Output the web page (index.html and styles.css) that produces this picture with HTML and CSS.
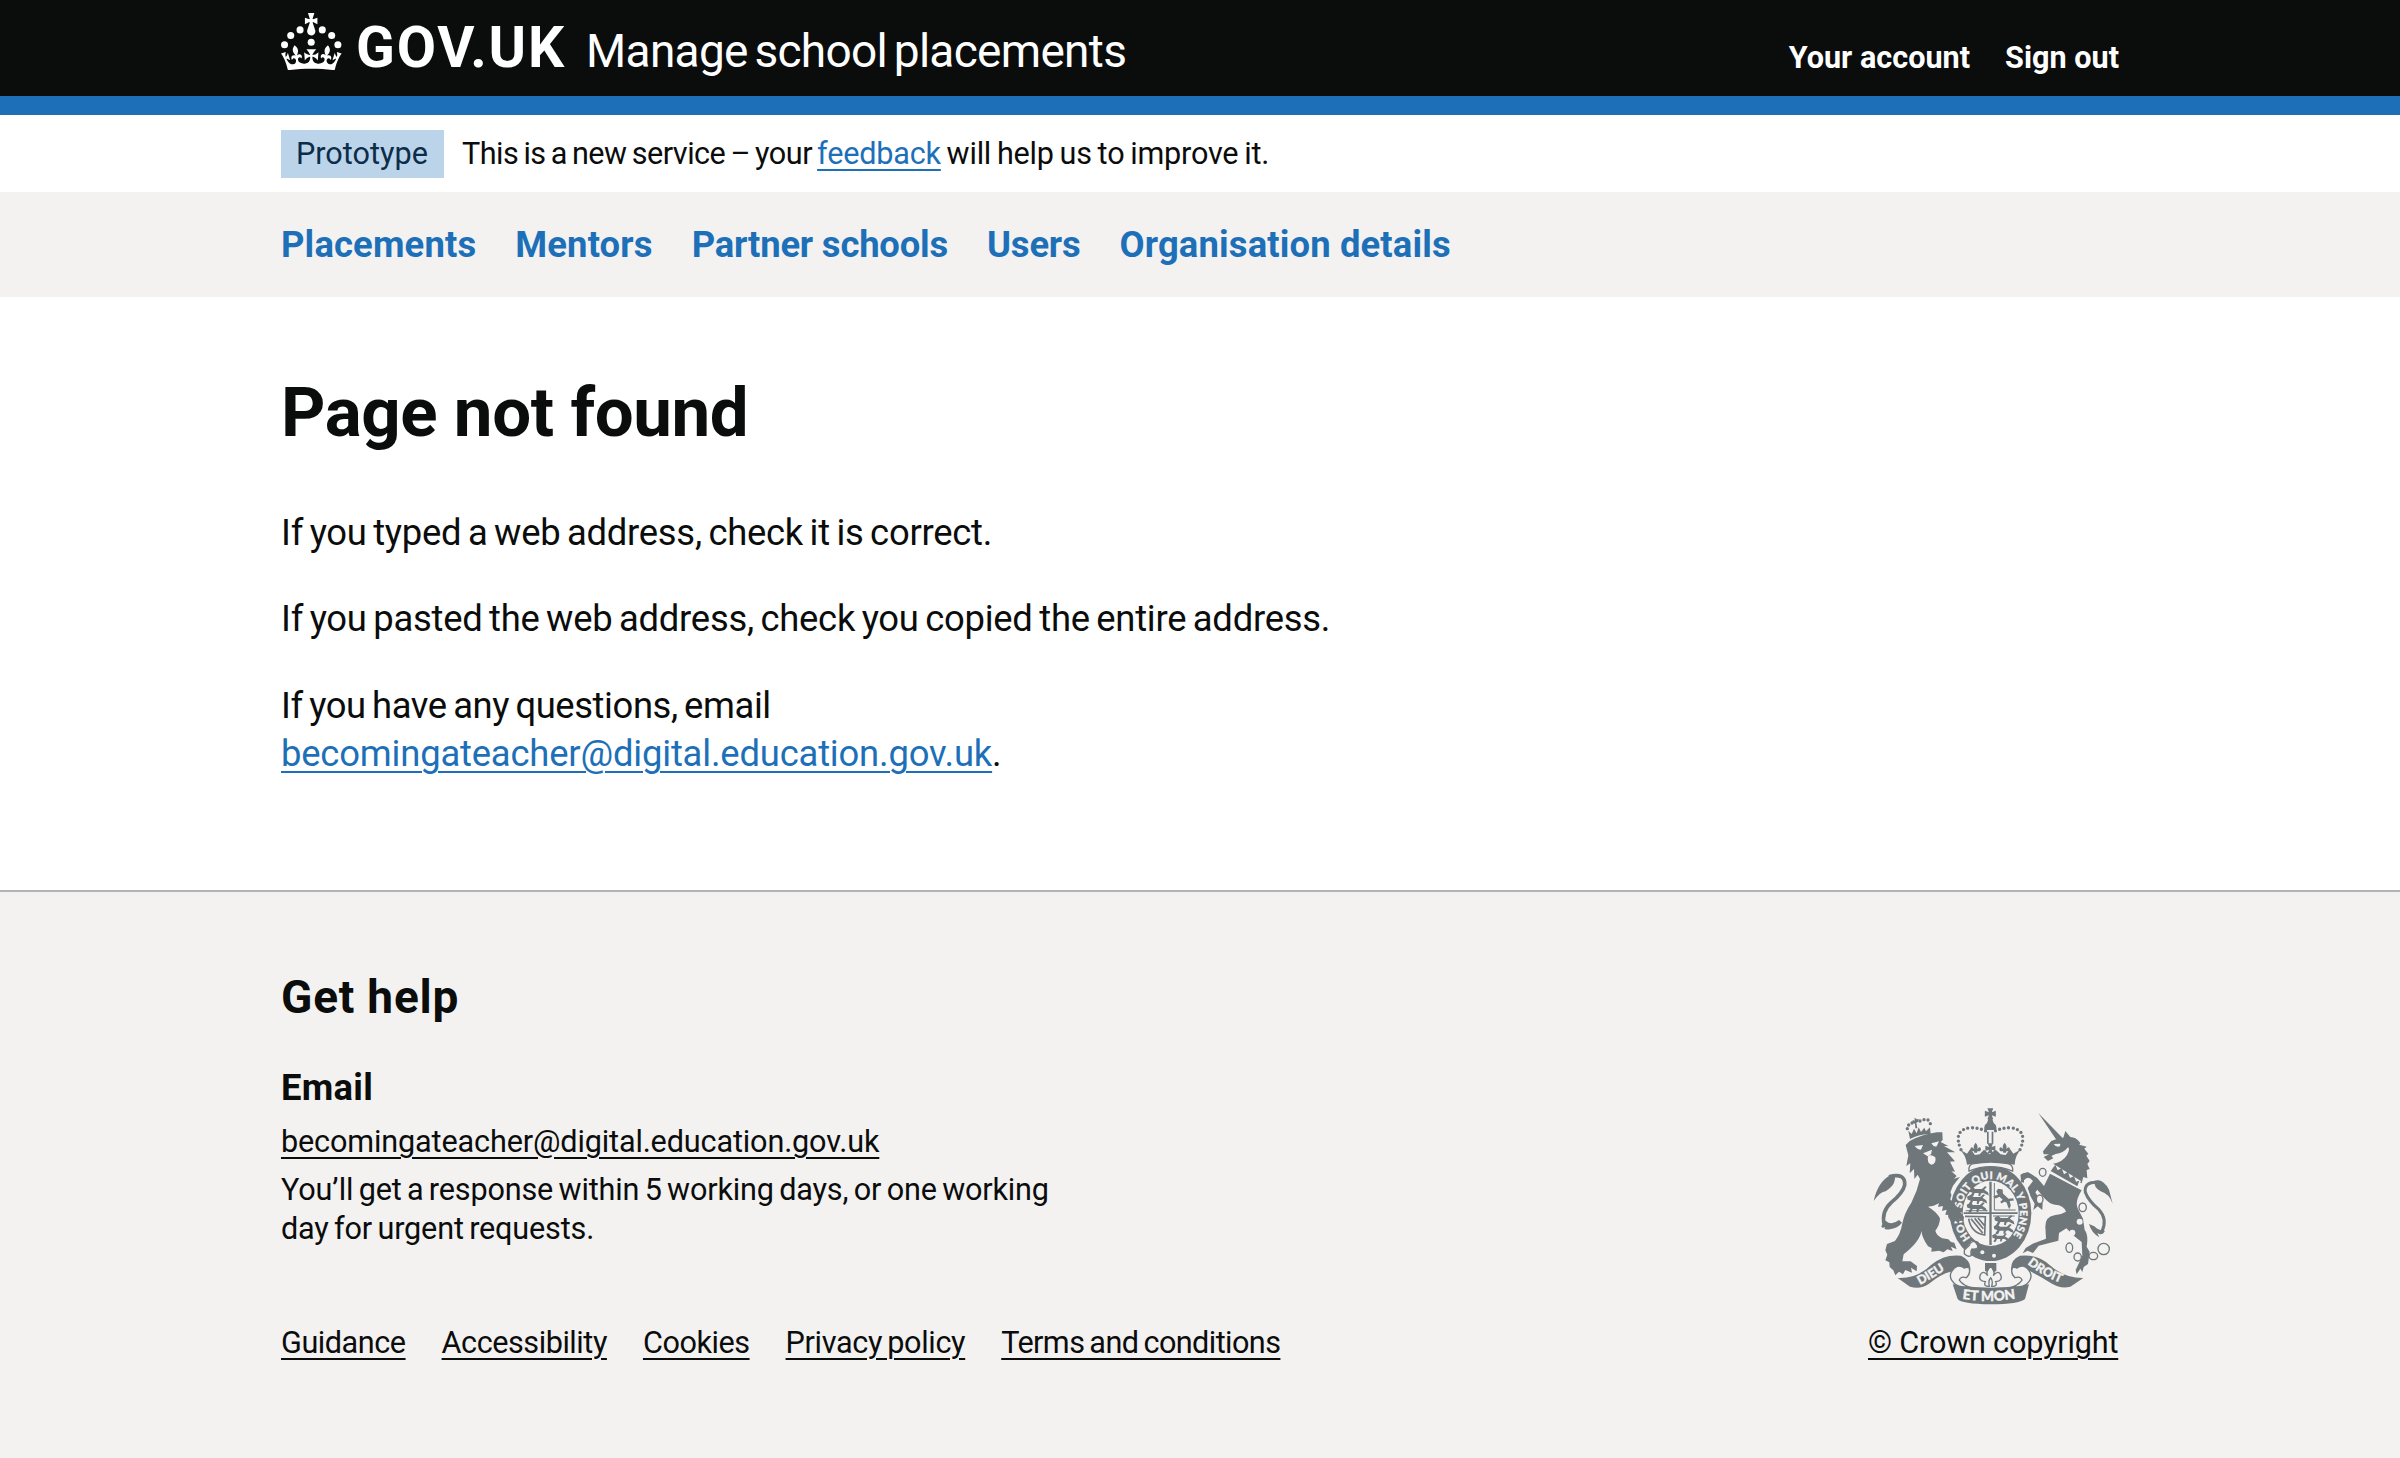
FILE: index.html
```
<!DOCTYPE html>
<html lang="en">
<head>
<meta charset="utf-8">
<title>Page not found - Manage school placements - GOV.UK</title>
<link rel="stylesheet" href="styles.css">
</head>
<body>
<header class="header">
  <div class="container header__row">
    <a class="header__home" href="#">
      <svg class="header__crown" viewBox="0 0 64 60" fill="currentColor" aria-hidden="true">
        <circle cx="20" cy="17.6" r="3.7"/><circle cx="10.2" cy="23.5" r="3.7"/><circle cx="3.7" cy="33.2" r="3.7"/>
        <circle cx="31.7" cy="30.6" r="3.7"/><circle cx="43.3" cy="17.6" r="3.7"/><circle cx="53.2" cy="23.5" r="3.7"/><circle cx="59.7" cy="33.2" r="3.7"/>
        <path d="M33.1,9.8c.2-.1.3-.3.5-.5l4.6,2.4v-6.8l-4.6,1.5c-.1-.2-.3-.3-.5-.5l1.9-5.9h-6.7l1.9,5.9c-.2.1-.3.3-.5.5l-4.6-1.5v6.8l4.6-2.4c.1.2.3.3.5.5l-2.6,8c-.9,2.8,1.2,5.7,4.1,5.7h0c3,0,5.1-2.9,4.1-5.7l-2.6-8ZM37,37.9s-3.4,3.8-4.1,6.1c2.2,0,4.2-.5,6.4-2.8l-.7,8.5c-2-2.8-4.4-4.1-5.7-3.8.1,3.1.5,6.7,5.8,7.2,3.7.3,6.7-1.5,7-3.8.4-2.6-2-4.3-3.7-1.6-1.4-4.5,2.4-6.1,4.9-3.2-1.9-4.5-1.8-7.7,2.4-10.9,3,4,2.6,7.3-1.2,11.1,2.4-1.3,6.2,0,4,4.6-1.2-2.8-3.7-2.2-4.2.2-.3,1.7.7,3.7,3,4.2,1.9.3,4.7-.9,7-5.9-1.3,0-2.4.7-3.9,1.7l2.4-8c.6,2.3,1.4,3.7,2.2,4.5.6-1.6.5-2.8,0-5.3l5,1.8c-2.6,3.6-5.2,8.7-7.3,17.5-7.4-1.1-15.7-1.7-24.5-1.7h0c-8.8,0-17.1.6-24.5,1.7-2.1-8.9-4.7-13.9-7.3-17.5l5-1.8c-.5,2.5-.6,3.7,0,5.3.8-.8,1.6-2.3,2.2-4.5l2.4,8c-1.5-1-2.6-1.7-3.9-1.7,2.3,5,5.2,6.2,7,5.9,2.3-.4,3.3-2.4,3-4.2-.5-2.4-3-3.1-4.2-.2-2.2-4.6,1.6-6,4-4.6-3.7-3.7-4.2-7.1-1.2-11.1,4.2,3.2,4.3,6.4,2.4,10.9,2.5-2.8,6.3-1.3,4.9,3.2-1.8-2.7-4.1-1-3.7,1.6.3,2.3,3.3,4.1,7,3.8,5.4-.5,5.7-4.2,5.8-7.2-1.3-.2-3.7,1-5.7,3.8l-.7-8.5c2.2,2.3,4.2,2.7,6.4,2.8-.7-2.3-4.1-6.1-4.1-6.1h10.6Z"/>
      </svg>
      <span class="header__logotype">GOV.UK</span>
      <span class="header__service">Manage school placements</span>
    </a>
    <nav class="header__account">
      <a class="header__link" href="#">Your account</a>
      <a class="header__link" href="#">Sign out</a>
    </nav>
  </div>
</header>
<div class="accent"></div>
<div class="container phase">
  <strong class="phase__tag">Prototype</strong>
  <span class="phase__text"><span class="phase__intro">This is a new service – your </span><a class="link" href="#">feedback</a> will help us to improve it.</span>
</div>
<nav class="primary-nav">
  <div class="container primary-nav__list">
    <a class="primary-nav__link" href="#">Placements</a>
    <a class="primary-nav__link" href="#">Mentors</a>
    <a class="primary-nav__link primary-nav__link--tight" href="#">Partner schools</a>
    <a class="primary-nav__link primary-nav__link--tight" href="#">Users</a>
    <a class="primary-nav__link" href="#">Organisation details</a>
  </div>
</nav>
<main class="container main">
  <h1 class="heading-xl">Page not found</h1>
  <p class="body">If you typed a web address, check it is correct.</p>
  <p class="body">If you pasted the web address, check you copied the entire address.</p>
  <p class="body"><span class="body__tight">If you have any questions, email</span><br><a class="link body__email" href="#">becomingateacher@digital.education.gov.uk</a>.</p>
</main>
<footer class="footer">
  <div class="container footer__row">
    <div class="footer__meta">
      <h2 class="heading-m">Get help</h2>
      <h3 class="heading-s">Email</h3>
      <p class="footer__text"><a class="link link--dark" href="#">becomingateacher@digital.education.gov.uk</a></p>
      <p class="footer__text footer__text--hours">You’ll get a response within 5 working days, or one working<br>day for urgent requests.</p>
      <ul class="footer__links">
        <li><a class="link link--dark" href="#">Guidance</a></li>
        <li><a class="link link--dark" href="#">Accessibility</a></li>
        <li><a class="link link--dark" href="#">Cookies</a></li>
        <li class="footer__links-privacy"><a class="link link--dark" href="#">Privacy policy</a></li>
        <li class="footer__links-terms"><a class="link link--dark" href="#">Terms and conditions</a></li>
      </ul>
    </div>
    <a class="copyright" href="#">
      <svg class="copyright__arms" viewBox="25 30 753 610" aria-hidden="true">
        <defs>
          <path id="garter" d="M332 429 A88 103 0 1 1 454 429"/>
          <path id="dieu" d="M181 570 Q228 545 275 512"/>
          <path id="droit" d="M503 507 Q550 545 613 567"/>
          <path id="etmon" d="M308 612 Q392 624 480 609"/>
          <g id="lily"><path d="M0-18Q9-8 4 2Q14-10 16 2Q16 9 9 8Q5 5 4 12H-4Q-5 5-9 8Q-16 9-16 2Q-14-10-4 2Q-9-8 0-18Z"/></g>
          <g id="cross"><path d="M-4-4L-8-15H8L4-4L15-8V8L4 4L8 15H-8L-4 4L-15 8V-8Z"/></g>
          <g id="beast"><path d="M-26-6l10-5 7 6H10l8-7 5 2-7 7 10 6 3 8-8-3-8-4-6 2-2 7-5-1 1-7H-10l-4 8-8 1 2-5 4-5-9-3Z"/></g>
        </defs>
        <g class="arms-fill">
          <!-- lion -->
          <path d="M151 132L146 107L156 117L163 101L171 115L177 97L184 111L194 98L199 109L211 97L213 118Q180 116 151 132Z"/>
          <circle cx="143" cy="101" r="5"/><circle cx="147" cy="90" r="5"/><circle cx="157" cy="84" r="5"/><circle cx="181" cy="78" r="5"/><circle cx="193" cy="74" r="5"/><circle cx="205" cy="75" r="5"/><circle cx="212" cy="86" r="5"/>
          <path d="M164 68l8 5 5-1-1 8-6 3 3 17h-6l-1-14-7-3 0-8 7 2Z"/>
          <path d="M138 150L150 138Q190 117 232 112L248 112L249 135L243 141L266 153L253 153L287 172L262 172L286 199L271 200L286 230L275 229L291 243L283 251L301 246L291 258L280 272L272 292Q288 322 298 348L311 372L303 380L292 368L289 380L278 371L268 376L266 360L257 359L261 344L247 348L250 333L235 336L238 325L222 332L205 335Q231 350 241 370Q241 389 227 407Q230 421 248 430L266 433L274 441L284 443L291 463L274 455L279 468L263 463L252 472L238 467L215 470L216 459L205 454Q188 430 185 408Q182 438 132 478L128 499L153 499L172 513L171 529L154 518L157 533L137 525L130 538L118 530L107 541L101 526L90 516L89 502L77 496L83 479L77 466L82 447L106 438Q122 417 127 390Q133 355 155 323Q173 288 181 252L174 239L164 252L163 222L150 235L152 205L140 213L146 181Z"/>
          <path d="M42 318Q55 260 92 241Q113 241 103 263Q98 275 78 289Q62 290 42 318Z"/>
          <path d="M70 385Q58 402 76 397Q70 407 94 402Q115 399 127 383L118 375Q95 393 78 377Z"/>
          <!-- unicorn -->
          <path d="M536 54L608 128L594 140Z"/>
          <path d="M550 169L575 138L597 130L611 128L617 108L632 126Q650 126 662 144L659 149L681 155L674 161L686 176L680 182L690 198L683 207L690 222L681 225L683 250L671 246L666 265L654 260L588 218L578 207Q609 202 622 180Q632 162 625 157Q611 175 588 177L575 183L581 190L565 198L552 186L568 178L552 178Z"/>
          <path d="M571 236L666 286Q645 320 654 340L670 371L675 405Q687 420 681 455L690 470L685 507L672 516L668 531L662 521L651 538L648 525L668 482L666 441L646 425L620 400L598 414L596 437L537 452L520 474L504 467L489 475L498 459L519 446L559 431Q558 410 557 395Q557 365 584 361Q605 359 619 350Q612 330 586 329Q568 326 553 308L533 284L527 292L541 316L549 325L548 345L534 334L521 345L525 326L512 303L504 279L520 258Q505 240 493 256L493 269L483 259L487 238L504 231L532 248L553 273Z"/>
          <path d="M759 326Q748 296 723 289Q701 276 705 257Q730 249 748 284Z"/>
          <path d="M688 387Q695 413 719 427L713 414Q728 424 736 407Q718 408 704 394Z"/>
          <!-- royal crown -->
          <use href="#cross" transform="translate(392 56) scale(1.1)"/>
          <path d="M386 72H398L402 84Q412 90 410 105H374Q372 90 382 84ZM382 110H387V146H382ZM396 110H401V146H396Z"/>
          <path d="M299 163L322 176L332 162L346 180L360 178L373 164L390 178L408 164L423 178L438 180L451 162L461 176L484 163Q466 181 465 209Q392 194 322 209Q318 178 299 163Z"/>
          <use href="#cross" transform="translate(392 160)"/>
          <use href="#lily" transform="translate(348 161)"/><use href="#lily" transform="translate(435 161)"/>
        </g>
        <ellipse class="arms-paper" cx="393" cy="355" rx="127" ry="147"/>
        <ellipse class="arms-fill" cx="393" cy="355" rx="122" ry="143"/>
        <g class="arms-line">
          <path stroke-width="10" stroke-linecap="round" stroke-dasharray="0 13.5" d="M304 164Q278 105 332 98Q360 98 380 109M481 164Q507 105 453 98Q425 98 404 109"/>
          <path stroke-width="11" d="M88 245Q138 232 135 270Q130 293 95 322Q64 350 74 389"/>
          <path stroke-width="9" d="M718 262Q672 258 677 292Q687 318 718 344Q744 372 727 409"/>
          <g stroke-width="4">
            <ellipse cx="549" cy="232" rx="10" ry="12"/><ellipse class="arms-paper-fill" cx="540" cy="313" rx="10" ry="13"/><ellipse class="arms-paper-fill" cx="669" cy="337" rx="11" ry="13"/><ellipse cx="629" cy="458" rx="10" ry="14"/><ellipse cx="654" cy="486" rx="11" ry="12"/><ellipse cx="701" cy="483" rx="13" ry="11"/><circle cx="732" cy="462" r="17"/>
          </g>
        </g>
        <g class="arms-paper">
          <path d="M165 153L190 150L184 164Q173 164 165 153ZM215 145L238 139L231 154Q222 157 215 145ZM205 184Q213 176 227 187Q231 207 215 209Q201 204 205 184ZM190 175L217 164L214 178L204 184Z"/>
          <path d="M582 147L602 146L601 154Q590 159 582 147Z"/>
          <path d="M578 205L664 258L654 279L568 232Z"/>
          <circle cx="660" cy="380" r="9"/><circle cx="638" cy="413" r="9"/>
          <path class="arms-outline" stroke-width="4" d="M328 228Q325 208 343 206Q392 196 444 206Q461 208 459 228Q392 202 328 228Z"/>
          <ellipse cx="393" cy="355" rx="84" ry="98"/>
          <circle cx="368" cy="472" r="6"/><circle cx="403" cy="482" r="6"/>
          <path d="M313 478Q340 486 334 463L354 462Q352 442 336 438Q323 455 315 463Z"/>
        </g>
        <g class="arms-fill">
          <path d="M573 228L587 209L594 226L606 219L613 238L625 230L631 249L643 243L649 260L659 257L653 274Z"/>
          <!-- quartered shield -->
          <path d="M389 260H396V352H474V357H396V450H389V357H312V352H389Z"/>
          <use href="#beast" transform="translate(356 288) scale(1.1 1.2)"/><use href="#beast" transform="translate(351 312) scale(1.1 1.2)"/><use href="#beast" transform="translate(350 336) scale(1.1 1.2)"/>
          <use href="#beast" transform="translate(433 375) scale(1.1 1.2)"/><use href="#beast" transform="translate(431 401) scale(1.1 1.2)"/><use href="#beast" transform="translate(421 427) scale(.9 1)"/>
          <use href="#beast" transform="translate(433 308) rotate(42) scale(1.2 1.4)"/>
        </g>
        <g class="arms-line">
          <path stroke-width="5" d="M316 364L377 365L375 420Q334 414 327 371M334 371L369 414M345 370L371 401M355 369L374 391"/>
          <path stroke-width="3" d="M404 264V345H468M318 347H384M400 363H465"/>
          <path stroke-width="4" d="M314 476Q329 490 337 479Q330 472 337 462Q352 465 358 453Q359 438 344 439Q332 440 329 451L314 465Z"/>
        </g>
        <g class="arms-fill">
          <!-- ribbon -->
          <path d="M114 549Q171 552 215 509Q255 476 304 482Q335 496 332 525L320 547Q306 520 273 530Q243 537 208 566Q183 584 151 575Z"/>
          <path d="M671 549Q614 550 569 509Q529 476 481 482Q452 494 454 525L463 546Q483 521 512 529Q541 543 577 566Q603 582 632 575Z"/>
          <path d="M279 568Q393 588 508 568L496 612Q478 628 393 628Q305 627 294 612Z"/>
        </g>
        <g class="arms-line" stroke-width="4">
          <path class="arms-paper-fill" d="M316 520Q290 501 274 533Q267 550 285 566Q299 578 325 575Q306 566 299 555Q303 542 320 548Q334 536 328 519"/>
          <path class="arms-paper-fill" d="M470 520Q496 501 512 533Q519 550 502 566Q488 578 461 575Q480 566 487 555Q483 542 466 548Q452 536 458 519"/>
          <path class="arms-paper-fill" d="M389 574Q370 575 377 560Q355 558 362 539Q371 524 384 542Q377 528 393 514Q408 528 401 542Q416 524 423 539Q430 558 408 560Q415 575 396 574Q401 556 393 548Q385 556 389 574Z"/>
        </g>
        <path class="arms-fill" d="M376 504H410V528L402 531L393 514L383 530L376 528Z"/>
        <g class="arms-text">
          <text font-size="31" letter-spacing="1"><textPath href="#garter">HONI SOIT QUI MAL Y PENSE</textPath></text>
          <text font-size="37"><textPath href="#dieu">DIEU</textPath></text>
          <text font-size="37"><textPath href="#droit">DROIT</textPath></text>
          <text font-size="41"><textPath href="#etmon">ET MON</textPath></text>
        </g>
        <!-- forepaw and hoof resting on the garter -->
        <path class="arms-fill" d="M262 305Q288 325 298 346L313 366L311 380L300 372L298 387L286 376L276 384L266 366Z"/>
        <path class="arms-line" stroke-width="7" d="M488 262L486 241Q500 230 520 246"/>
      </svg>
      <span class="link link--dark">© Crown copyright</span>
    </a>
  </div>
</footer>
</body>
</html>
```
FILE: styles.css
```
* { box-sizing: border-box; }
body {
  margin: 0;
  min-height: 1458px;
  display: flex;
  flex-direction: column;
  background: #fff;
  color: #0b0c0c;
  font-family: Roboto, "Liberation Sans", sans-serif;
  font-size: 30.6px;
}
h1, h2, h3, p, ul { margin: 0; padding: 0; }
.container { width: 1838px; margin: 0 auto; }
.link {
  color: #1d70b8;
  text-decoration: underline;
  text-decoration-thickness: 2px;
  text-underline-offset: 5px;
}
.link--dark { color: #0b0c0c; }

.header { height: 96px; background: #0b0c0c; color: #fff; }
.header__row { display: flex; justify-content: space-between; height: 96px; }
.header__home { display: flex; color: #fff; text-decoration: none; }
.header__crown { width: 61px; height: 57.4px; margin-top: 13px; }
.header__logotype { margin-left: 14px; font-size: 57px; font-weight: 700; letter-spacing: 1.84px; line-height: 60px; padding-top: 18px; }
.header__service { margin-left: 20px; font-size: 46px; letter-spacing: -.7px; word-spacing: -4px; line-height: 60px; padding-top: 21px; }
.header__account { display: flex; gap: 35px; padding-top: 40px; line-height: 36px; }
.header__link { color: #fff; font-weight: 700; text-decoration: none; }
.accent { height: 19px; background: #1d70b8; }

.phase { display: flex; height: 77px; padding-top: 15px; line-height: 48px; }
.phase__tag { width: 163px; height: 48px; padding-left: 15px; background: #bbd4ea; color: #0c2d4a; font-weight: 400; }
.phase__text { margin-left: 18px; letter-spacing: -.2px; word-spacing: -1.6px; }
.phase__intro { letter-spacing: -.5px; word-spacing: -2px; }

.primary-nav { height: 105px; background: #f3f2f1; }
.primary-nav__list { display: flex; gap: 39px; padding-top: 31px; line-height: 44px; }
.primary-nav__link { color: #1d70b8; font-size: 36.4px; font-weight: 700; letter-spacing: .15px; text-decoration: none; line-height: 44px; }
.primary-nav__link--tight { letter-spacing: -.18px; }

.main { padding-top: 77px; height: 593px; }
.heading-xl { margin-bottom: 57px; font-size: 69px; line-height: 78px; letter-spacing: -.4px; }
.body { margin-bottom: 38.5px; font-size: 36.4px; line-height: 47.9px; letter-spacing: -.25px; word-spacing: -2.2px; }
.body__tight { letter-spacing: -.41px; }
.body__email { letter-spacing: -.18px; }

.footer { flex: 1; border-top: 2px solid #b1b4b6; background: #f3f2f1; }
.footer__row { display: flex; justify-content: space-between; padding-top: 77px; }
.heading-m { margin-bottom: 38px; font-size: 46px; line-height: 57px; letter-spacing: .79px; }
.heading-s { margin-bottom: 11px; font-size: 36.4px; line-height: 48px; letter-spacing: .3px; }
.footer__text { margin-bottom: 10px; line-height: 38.3px; letter-spacing: -.14px; }
.footer__text--hours { margin-bottom: 76px; letter-spacing: -.165px; word-spacing: -2px; }
.footer__links { display: flex; gap: 36px; list-style: none; line-height: 38.3px; letter-spacing: -.45px; }
.footer__links-privacy { letter-spacing: -.34px; word-spacing: -2px; }
.footer__links-terms { letter-spacing: -.57px; word-spacing: -2px; }

.copyright { display: flex; flex-direction: column; width: 251px; padding-top: 136px; line-height: 38.3px; letter-spacing: -.18px; text-decoration: none; }
.copyright__arms { width: 251px; height: 203.4px; margin-bottom: 16px; }
.arms-fill { fill: #6f777b; }
.arms-line { fill: none; stroke: #6f777b; }
.arms-outline { stroke: #6f777b; }
.arms-paper, .arms-paper-fill { fill: #f3f2f1; }
.arms-text { fill: #f3f2f1; stroke: #f3f2f1; stroke-width: 1px; font-family: Lato, sans-serif; font-weight: 900; }
```
